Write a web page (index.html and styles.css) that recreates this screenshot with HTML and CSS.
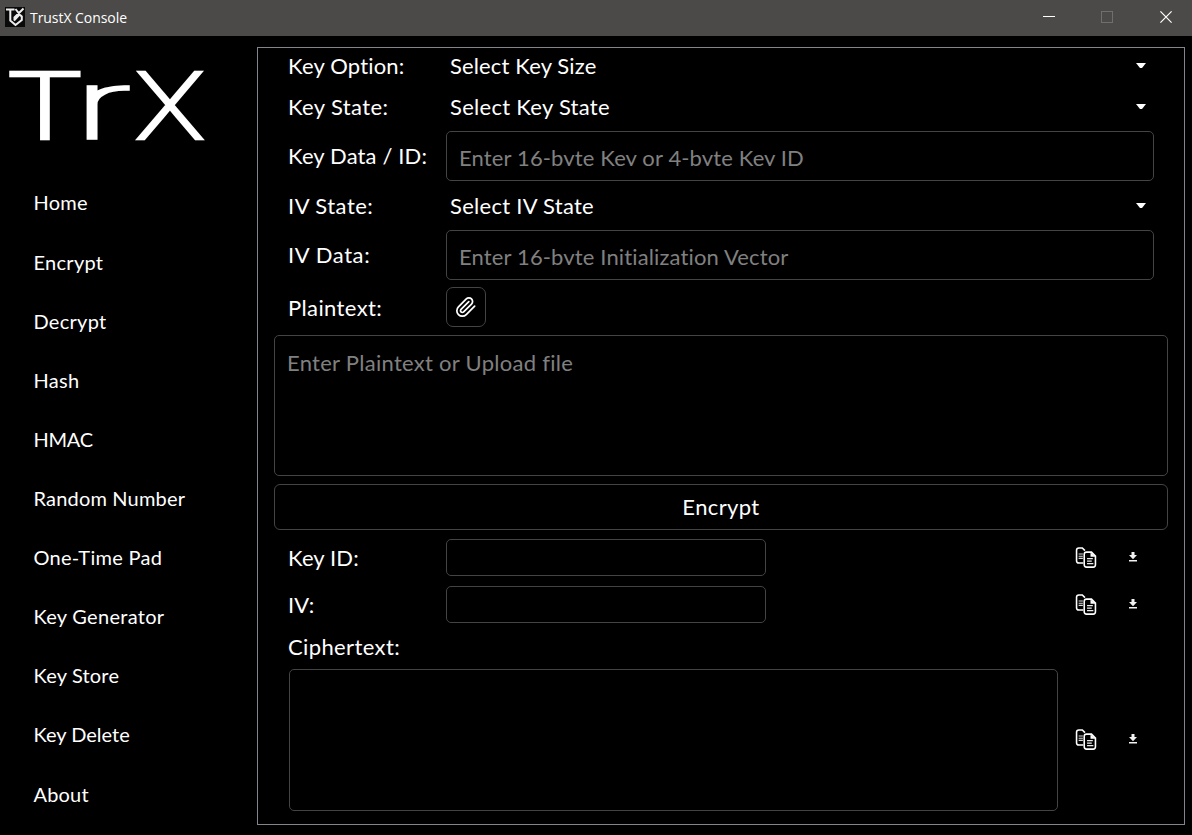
FILE: index.html
```html
<!DOCTYPE html>
<html lang="en">
<head>
<meta charset="utf-8">
<title>TrustX Console</title>
<link rel="stylesheet" href="styles.css">
</head>
<body>
<svg class="defs" aria-hidden="true">
  <symbol id="copy" viewBox="0 0 20 20">
    <path d="M7.500 15.200H3.200Q1 15.200 1 13V3.200Q1 1 3.200 1H6.500L9 3.500" fill="none" stroke="#fff" stroke-width="1.500"/>
    <path d="M3 6.700h4M3 8.800h4M3 10.900h4" stroke="#ddd" stroke-width="1.100"/>
    <path d="M10.500 4.900h4.700L19 8.700V17q0 2.200-2.200 2.200h-6.300q-2.200 0-2.200-2.200V7q0-2.100 2.200-2.100z" fill="#000" stroke="#fff" stroke-width="1.500"/>
    <path d="M14.300 4.900L19 9.400H14.300z" fill="#fff"/>
    <path d="M11 11h5.500M11 13.400h4.500M11 15.800h6" stroke="#eee" stroke-width="1.200"/>
  </symbol>
  <symbol id="download" viewBox="0 0 8 10">
    <path d="M2.500 0h3v3H8L4 7.200 0 3h2.500zM0 8h8v1.600H0z" fill="#f2f2f2"/>
  </symbol>
</svg>

<header class="titlebar">
  <svg class="app-icon" viewBox="0 0 20 20">
    <rect width="20" height="20" fill="#0a0a0a"/>
    <path d="M1 2.500H9.500M5.300 2.500V13.500L10.500 18L16.800 13V9.500L14.500 7.500L9 13.500M18.500 1.500L9.500 10.500V13.500M10.500 2L14.800 7.500" fill="none" stroke="#eee" stroke-width="2"/>
  </svg>
  <span class="title">TrustX Console</span>
  <svg class="win-btn" viewBox="0 0 12 12"><path d="M0 5.500h12" stroke="#fff"/></svg>
  <svg class="win-btn" viewBox="0 0 12 12"><rect x=".5" y=".5" width="11" height="11" fill="none" stroke="#716f6d"/></svg>
  <svg class="win-btn close" viewBox="0 0 12 12"><path d="M.4.4l11.200 11.200M11.600.4L.4 11.600" stroke="#fff" stroke-width="1.200"/></svg>
</header>

<div class="window">
  <aside class="sidebar">
    <svg class="logo" viewBox="0 0 257 137" role="img" aria-label="TrX">
      <g class="logo-text">
        <text transform="translate(4.500 101.500) scale(1.360 .930)">T</text>
        <text class="narrow" transform="translate(72.500 102.200) scale(1.880 .970)">r</text>
        <text transform="translate(137 101.500) scale(1.100 .930)">X</text>
      </g>
    </svg>
    <nav class="nav">
      <a class="track-3">Home</a>
      <a class="track-3">Encrypt</a>
      <a class="track-3">Decrypt</a>
      <a class="track-3">Hash</a>
      <a class="snug">HMAC</a>
      <a class="track-2">Random Number</a>
      <a class="track-3">One-Time Pad</a>
      <a class="track-3">Key Generator</a>
      <a class="track-2">Key Store</a>
      <a>Key Delete</a>
      <a class="track-2">About</a>
    </nav>
  </aside>

  <main class="panel">
    <div class="row row-first"><label class="track-2">Key Option:</label><div class="select"><span class="track-1">Select Key Size</span><i class="caret"></i></div></div>
    <div class="row row-second"><label class="track-4">Key State:</label><div class="select"><span class="track-3">Select Key State</span><i class="caret"></i></div></div>
    <div class="row row-input"><label class="track-1 raised">Key Data / ID:</label><div class="input"><span class="hint track-1">Enter 16-byte Key or 4-byte Key ID</span></div></div>
    <div class="row row-iv"><label class="track-5">IV State:</label><div class="select"><span class="track-3">Select IV State</span><i class="caret"></i></div></div>
    <div class="row row-input"><label class="track-6 raised">IV Data:</label><div class="input"><span class="hint track-1">Enter 16-byte Initialization Vector</span></div></div>
    <div class="row row-attach"><label class="track-4">Plaintext:</label>
      <button class="attach"><svg viewBox="0 0 24 24"><path d="m21.440 11.050-9.190 9.190a6 6 0 0 1-8.490-8.490l8.570-8.570A4 4 0 1 1 18 8.840l-8.590 8.570a2 2 0 0 1-2.830-2.830l8.490-8.480" fill="none" stroke="#fff" stroke-width="1.900" stroke-linecap="round"/></svg></button>
    </div>
    <div class="textarea"><span class="track-3">Enter Plaintext or Upload file</span></div>
    <button class="submit track-4">Encrypt</button>
    <div class="row row-out"><label class="track-1">Key ID:</label><div class="output"></div><div class="tools"><svg class="copy"><use href="#copy"/></svg><svg class="download"><use href="#download"/></svg></div></div>
    <div class="row row-out"><label>IV:</label><div class="output"></div><div class="tools"><svg class="copy"><use href="#copy"/></svg><svg class="download"><use href="#download"/></svg></div></div>
    <div class="row row-cipher"><label class="track-4">Ciphertext:</label></div>
    <div class="row row-result"><div class="result"></div><div class="tools"><svg class="copy"><use href="#copy"/></svg><svg class="download"><use href="#download"/></svg></div></div>
  </main>
</div>
</body>
</html>
```
FILE: styles.css
```css
* { box-sizing: border-box; }
body { margin: 0; height: 835px; overflow: hidden; background: #000; color: #fff; font-family: Lato, "Open Sans", sans-serif; font-size: 22px; }
svg { display: block; flex: none; }
button { font: inherit; color: inherit; background: none; padding: 0; }
.defs { display: none; }

.titlebar { height: 36px; padding: 0 20px 2px 5px; display: flex; align-items: center; background: #4b4a48; }
.app-icon { width: 20px; height: 20px; margin-right: 5px; }
.title { font: 14px "Open Sans", sans-serif; letter-spacing: -.05px; margin-right: auto; }
.win-btn { width: 12px; height: 12px; margin-left: 46px; }
.close { margin-left: 47px; }

.window { display: flex; height: 799px; }
.sidebar { width: 257px; }
.logo { width: 257px; height: 137px; }
.logo-text { font: 100 96.500px Inter, sans-serif; fill: #fff; stroke: #fff; stroke-width: 5px; stroke-linejoin: miter; }
.logo-text .narrow { stroke-width: 3.600px; }
.nav a { display: block; height: 59px; padding: 17px 0 18px 33.500px; font-size: 20px; line-height: 24px; }
.nav a:first-child { margin-bottom: 1px; }
.nav a:last-child { margin-top: 1px; }

.panel { width: 928px; height: 778px; margin-top: 11px; border: 1px solid #84848c; }
.row { display: flex; align-items: center; padding-left: 30px; }
.row label { width: 158px; white-space: nowrap; }
.row .raised { padding-bottom: 2px; }
.row-first { height: 35px; }
.row-second { height: 47px; margin-bottom: 1px; }
.row-input { height: 50px; }
.row-iv { height: 49px; }
.row-attach { height: 40px; margin-top: 7px; }
.select { display: flex; align-items: center; justify-content: space-between; width: 700px; padding-left: 4px; }
.caret { width: 10px; height: 5px; background: #fff; clip-path: polygon(0 0, 100% 0, 60% 100%, 40% 100%); }
.input { width: 708px; height: 50px; border: 1px solid #444; border-radius: 5px; padding: 12px 0 0 12px; }
.hint { display: block; height: 22px; line-height: 27px; overflow: hidden; color: #808080; white-space: nowrap; }
.attach { display: flex; align-items: center; justify-content: center; width: 40px; height: 40px; border: 1px solid #444; border-radius: 7px; }
.attach svg { width: 22px; height: 22px; }
.textarea { width: 894px; height: 141px; margin: 8px 0 8px 16px; border: 1px solid #444; border-radius: 5px; padding: 13px 0 0 12px; line-height: 27px; color: #808080; }
.submit { display: block; width: 894px; height: 46px; margin: 0 0 9px 16px; border: 1px solid #444; border-radius: 6px; padding-bottom: 2px; }
.row-out { height: 37px; margin-bottom: 10px; }
.output { width: 320px; height: 37px; border: 1px solid #444; border-radius: 5px; }
.tools { display: flex; align-items: center; margin-left: auto; padding-right: 47px; gap: 32px; }
.copy { width: 22px; height: 21px; }
.download { width: 8px; height: 10px; margin-bottom: 1px; }
.row-cipher { height: 26px; margin: 1px 0 10px; }
.row-result { height: 142px; padding-left: 31px; }
.row-result .tools { padding-bottom: 2px; }
.result { width: 769px; height: 142px; border: 1px solid #444; border-radius: 5px; }

.snug { letter-spacing: -.25px; }
.track-1 { letter-spacing: .14px; }
.track-2 { letter-spacing: .18px; }
.track-3 { letter-spacing: .28px; }
.track-4 { letter-spacing: .38px; }
.track-5 { letter-spacing: .48px; }
.track-6 { letter-spacing: .6px; }
```
